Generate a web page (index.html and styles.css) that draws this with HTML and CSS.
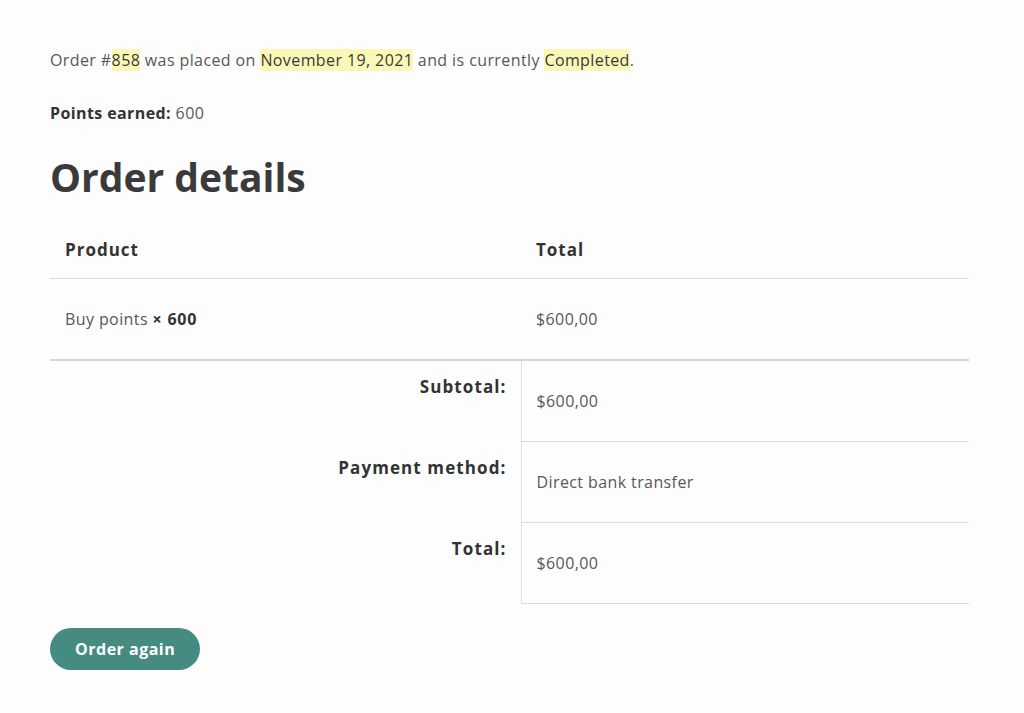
FILE: index.html
```html
<!DOCTYPE html>
<html lang="en">
<head>
  <meta charset="UTF-8">
  <meta name="viewport" content="width=device-width, initial-scale=1.0">
  <title>Order #858</title>
  <link rel="stylesheet" href="styles.css">
</head>
<body>
  <main class="order">
    <p class="order-status">
      Order #<mark>858</mark> was placed on <mark>November 19, 2021</mark> and is currently <mark>Completed</mark>.
    </p>

    <p class="order-points"><strong>Points earned:</strong> 600</p>

    <h2 class="order-title">Order details</h2>

    <table class="order-table">
      <thead>
        <tr>
          <th class="col-product">Product</th>
          <th class="col-total">Total</th>
        </tr>
      </thead>
      <tbody>
        <tr>
          <td class="col-product">Buy points <strong>× 600</strong></td>
          <td class="col-total">$600,00</td>
        </tr>
      </tbody>
      <tfoot>
        <tr>
          <th scope="row">Subtotal:</th>
          <td>$600,00</td>
        </tr>
        <tr>
          <th scope="row">Payment method:</th>
          <td>Direct bank transfer</td>
        </tr>
        <tr>
          <th scope="row">Total:</th>
          <td>$600,00</td>
        </tr>
      </tfoot>
    </table>

    <a class="order-again" href="#">Order again</a>
  </main>
</body>
</html>
```

FILE: styles.css
```css
body {
  margin: 0;
  background-color: #fdfdfd;
  color: #585858;
  font-family: "Open Sans", "Liberation Sans", sans-serif;
  font-size: 16px;
  line-height: 24px;
  letter-spacing: 0.4px;
}

.order {
  width: 919px;
  padding: 48px 0 40px 50px;
}

.order p {
  margin: 0;
}

.order strong {
  color: #333;
  font-weight: 700;
}

.order-table tbody strong {
  letter-spacing: 0.8px;
}

mark {
  background-color: #fbf7b7;
  color: #3a3a3a;
}

.order-points {
  margin-top: 29px !important;
}

.order-title {
  margin: 25px 0 0;
  color: #3a3a3a;
  font-size: 39px;
  line-height: 54px;
  font-weight: 700;
  letter-spacing: 0;
}

.order-table {
  width: 100%;
  border-collapse: collapse;
  margin-top: 34px;
}

.order-table th,
.order-table td {
  text-align: left;
  padding: 0 15px;
}

.order-table thead th {
  color: #333;
  font-size: 17px;
  letter-spacing: 1px;
  padding-top: 0;
  padding-bottom: 16px;
  border-bottom: 1px solid #dcdcdc;
}

.order-table tbody td {
  height: 80px;
  vertical-align: middle;
  border-bottom: 2px solid #d6d6d6;
}

.order-table .col-product {
  width: 441px;
}

.order-table tfoot th {
  text-align: right;
  vertical-align: top;
  padding: 14px 14px 0 0;
  color: #333;
  font-size: 17px;
  letter-spacing: 1.1px;
}

.order-table tfoot td {
  height: 80px;
  vertical-align: middle;
  border-left: 1px solid #e2e2e2;
  border-bottom: 1px solid #dcdcdc;
}

.order-again {
  display: inline-block;
  margin-top: 24px;
  padding: 9px 25px;
  background-color: #468b82;
  color: #fff;
  border-radius: 21px;
  font-size: 16px;
  font-weight: 700;
  letter-spacing: 0.5px;
  text-decoration: none;
}
```
